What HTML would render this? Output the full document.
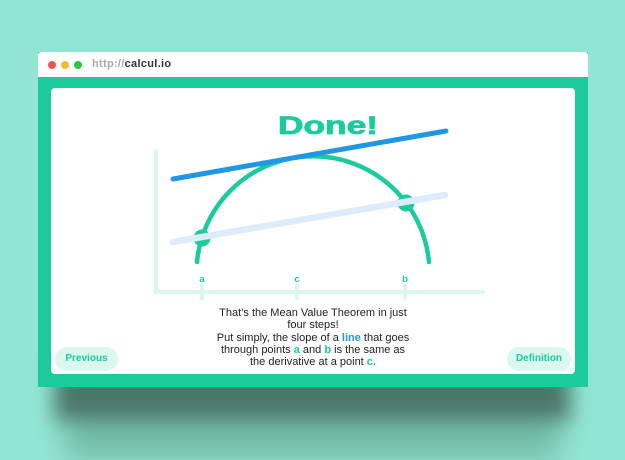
<!DOCTYPE html>
<html><head><meta charset="utf-8"><style>
html,body{margin:0;padding:0;}
body{width:625px;height:460px;background:#93e5d3;position:relative;overflow:hidden;font-family:"Liberation Sans",sans-serif;}
.shadow{position:absolute;left:55px;top:370px;width:515px;height:50px;background:#4a7669;filter:blur(10px);}
.shadow2{position:absolute;left:65px;top:400px;width:495px;height:60px;background:#74bca8;filter:blur(14px);}
.win{position:absolute;left:38px;top:52px;width:550px;height:335px;background:#1bcb9c;}
.bar{position:absolute;left:0;top:0;width:550px;height:25px;background:#fff;border-radius:3px 3px 0 0;}
.dot{position:absolute;top:9px;width:8px;height:8px;border-radius:50%;}
.url{position:absolute;left:54px;top:6px;font-size:11px;font-weight:bold;color:#aaa;letter-spacing:.3px;}
.url b{color:#333;}
.card{position:absolute;left:13px;top:36px;width:524px;height:286px;background:#fff;border-radius:4px;}
.btn{position:absolute;top:259px;height:24px;line-height:24px;background:#daf7f0;color:#1bcb9c;font-weight:bold;font-size:10px;border-radius:12px;text-align:center;}
.txt{position:absolute;left:163px;width:198px;top:219px;text-align:center;font-size:11px;line-height:12.3px;color:#222;}
.g{color:#1bcb9c;font-weight:bold}.bl{color:#1f96e6;font-weight:bold}
</style></head><body>
<div class="shadow2"></div><div class="shadow"></div>
<div class="win">
<div class="bar">
<div class="dot" style="left:10px;background:#f5534d"></div>
<div class="dot" style="left:23px;background:#f9bb2d"></div>
<div class="dot" style="left:36px;background:#2ec840"></div>
<div class="url">http://<b>calcul.io</b></div>
</div>
<div class="card">
<div class="btn" style="left:4px;width:63px;">Previous</div>
<div class="btn" style="left:456px;width:64px;">Definition</div>
<div class="txt">That’s the Mean Value Theorem in just four steps!<br>Put simply, the slope of a <span class="bl">line</span> that goes through points <span class="g">a</span> and <span class="g">b</span> is the same as the derivative at a point <span class="g">c</span>.</div>
</div>
</div>
<svg width="625" height="460" style="position:absolute;left:0;top:0">
<text x="278" y="134" textLength="100" lengthAdjust="spacingAndGlyphs" font-family="Liberation Sans,sans-serif" font-weight="bold" font-size="25" fill="#1bcb9c" stroke="#1bcb9c" stroke-width="0.8">Done!</text>
<g stroke="#d9f7ef" stroke-width="4" stroke-linecap="round" fill="none">
<path d="M156 151 V292 H483"/>
<path d="M202 285 V298 M297 285 V298 M405 285 V298"/>
</g>
<g font-family="Liberation Sans,sans-serif" font-weight="bold" font-size="9.5" fill="#1bcb9c" text-anchor="middle">
<text x="202" y="282">a</text><text x="297" y="282">c</text><text x="405" y="282">b</text></g>
<path d="M197 262 A116.5 116.5 0 0 1 429 262" stroke="#1bcb9c" stroke-width="4.5" fill="none" stroke-linecap="round"/>
<circle cx="202" cy="238" r="8.5" fill="#1bcb9c"/><circle cx="406" cy="203" r="8.5" fill="#1bcb9c"/>
<line x1="173" y1="242" x2="445" y2="195" stroke="#dcecfa" stroke-width="6.5" stroke-linecap="round"/>
<line x1="173" y1="179" x2="446" y2="131" stroke="#1f96e6" stroke-width="5" stroke-linecap="round"/>
</svg>
</body></html>
